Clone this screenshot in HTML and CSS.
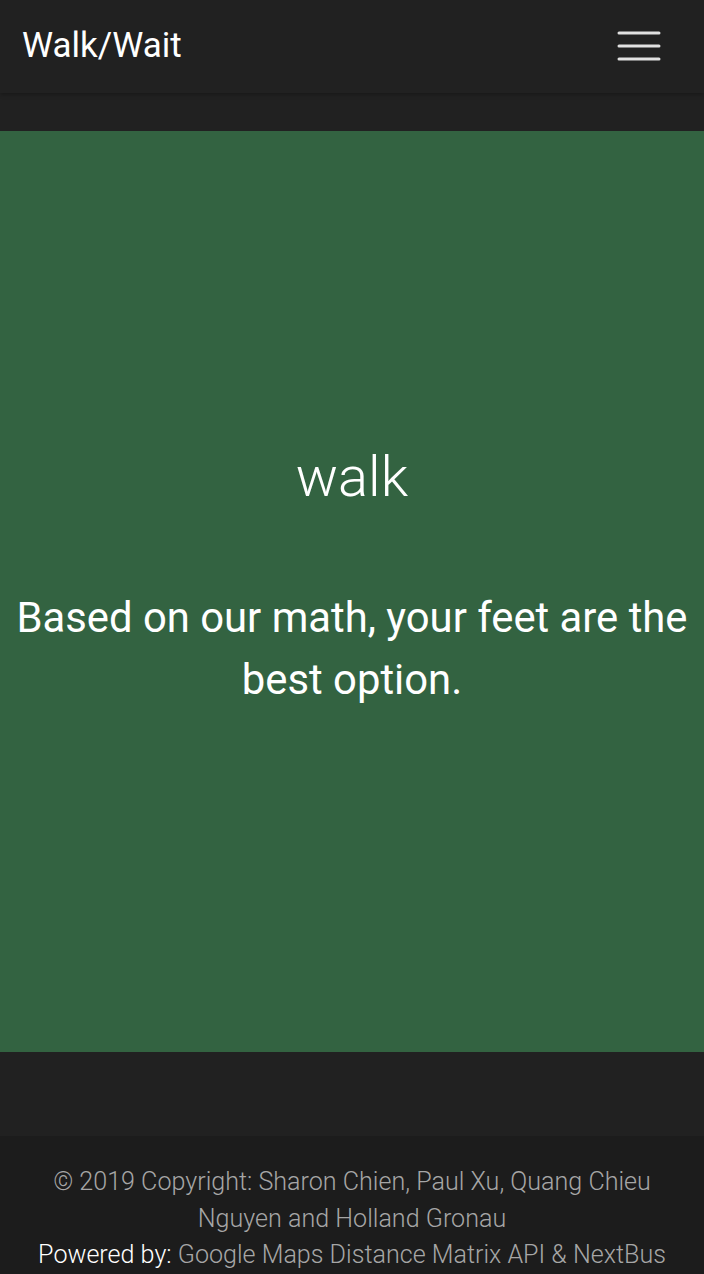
FILE: index.html
```html
<!DOCTYPE html>
<html lang="en">
<head>
<meta charset="utf-8">
<title>Walk/Wait</title>
<link rel="stylesheet" href="styles.css">
</head>
<body>
<nav class="navbar">
  <span class="brand">Walk/Wait</span>
  <button class="toggler" aria-label="Menu">
    <svg width="44" height="32" viewBox="0 0 44 32">
      <g stroke="#e0e0e0" stroke-width="3" stroke-linecap="round">
        <line x1="2" y1="3" x2="42" y2="3"/>
        <line x1="2" y1="16" x2="42" y2="16"/>
        <line x1="2" y1="29" x2="42" y2="29"/>
      </g>
    </svg>
  </button>
</nav>
<main class="content">
  <section class="result">
    <h1 class="verdict">walk</h1>
    <p class="message">Based on our math, your feet are the best option.</p>
  </section>
</main>
<footer class="footer">
  <p class="copy">© 2019 Copyright: Sharon Chien, Paul Xu, Quang Chieu Nguyen and Holland Gronau</p>
  <p class="powered">Powered by: <span class="muted">Google Maps Distance Matrix API &amp; NextBus</span></p>
</footer>
</body>
</html>
```

FILE: styles.css
```css
* { box-sizing: border-box; }
html, body {
  margin: 0;
  padding: 0;
  background: #212121;
  font-family: Roboto, "Noto Sans", sans-serif;
  color: #fff;
}
.navbar {
  height: 93px;
  display: flex;
  align-items: center;
  justify-content: space-between;
  padding: 0 22px 2px 22px;
  background: #212121;
  box-shadow: 0 2px 4px rgba(0,0,0,0.25);
  position: relative;
}
.brand {
  font-size: 35px;
  font-weight: 400;
  letter-spacing: 0;
}
.toggler {
  background: none;
  border: 0;
  padding: 0;
  margin-right: 21px;
  display: flex;
}
.content {
  padding-top: 38px;
  padding-bottom: 84px;
}
.result {
  background: #336341;
  height: 921px;
  display: flex;
  flex-direction: column;
  align-items: center;
  justify-content: center;
  text-align: center;
  padding: 0 10px 23px;
}
.verdict {
  margin: 0 0 82px;
  font-size: 56px;
  font-weight: 300;
  line-height: 1;
}
.message {
  margin: 0;
  font-size: 41.8px;
  font-weight: 400;
  line-height: 62px;
}
.footer {
  background: #1c1c1c;
  text-align: center;
  padding: 28px 30px 20px;
  font-size: 25.1px;
  font-weight: 300;
  line-height: 36.5px;
}
.footer p { margin: 0; }
.copy, .muted { color: #a6a6a6; }
.powered { color: #fff; }
```
